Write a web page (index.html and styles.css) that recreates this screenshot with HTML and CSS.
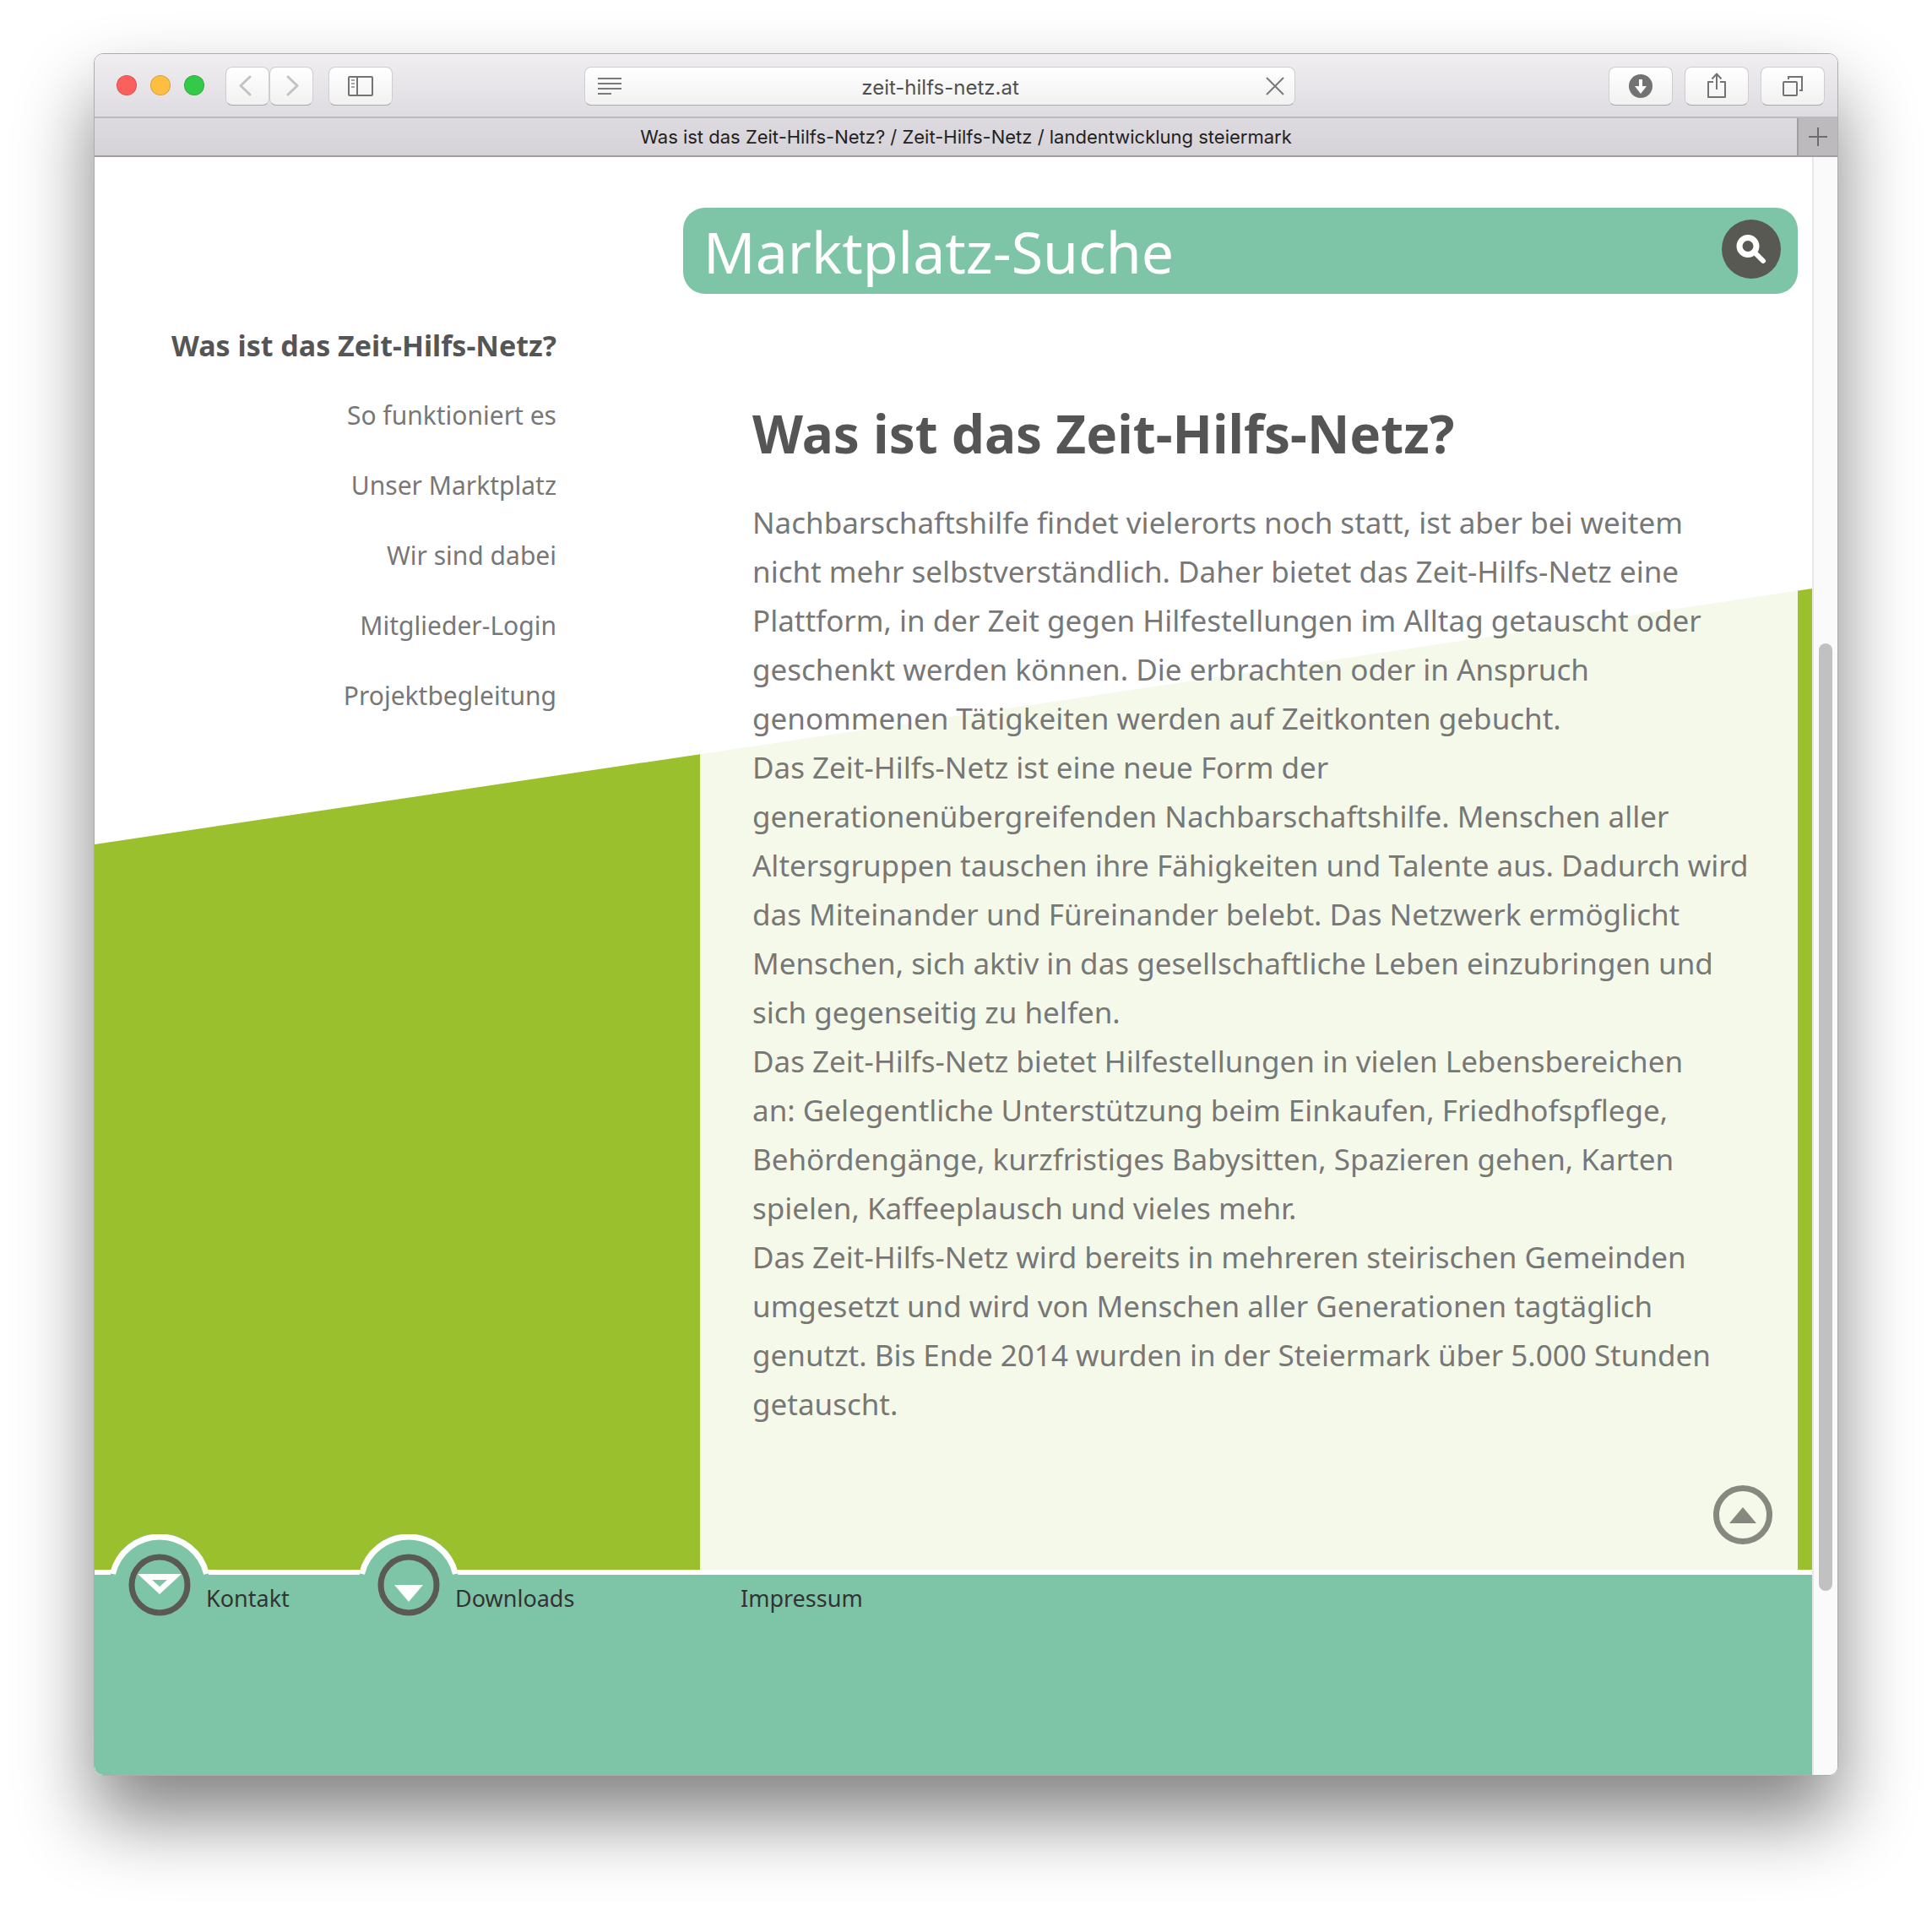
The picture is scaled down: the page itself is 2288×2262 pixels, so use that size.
FILE: index.html
```html
<!DOCTYPE html>
<html lang="de">
<head>
<meta charset="utf-8">
<meta name="viewport" content="width=device-width, initial-scale=1">
<title>Was ist das Zeit-Hilfs-Netz? / Zeit-Hilfs-Netz / landentwicklung steiermark</title>
<link rel="stylesheet" href="styles.css">
</head>
<body>
<div class="window">
  <header class="toolbar">
    <div class="toolbar-left">
      <div class="lights"><span class="light red"></span><span class="light yellow"></span><span class="light green"></span></div>
      <div class="history">
        <button class="tool narrow" type="button" aria-label="Zurück"><svg width="50" height="44" viewBox="0 0 50 44"><path d="M28 11 17 21.500 28 32" fill="none" stroke="#c3c3c3" stroke-width="3" stroke-linecap="round" stroke-linejoin="round"/></svg></button>
        <button class="tool narrow" type="button" aria-label="Vorwärts"><svg width="50" height="44" viewBox="0 0 50 44"><path d="M21 11 32 21.500 21 32" fill="none" stroke="#c3c3c3" stroke-width="3" stroke-linecap="round" stroke-linejoin="round"/></svg></button>
      </div>
      <button class="tool" type="button" aria-label="Seitenleiste"><svg width="74" height="44" viewBox="0 0 74 44"><g fill="none" stroke="#737373" stroke-width="2"><rect x="23" y="11" width="28" height="22" rx="1"/><path d="M33 11v22"/><path stroke="#a5a5a5" d="M26 15h4M26 19h4M26 23h4"/></g></svg></button>
    </div>
    <div class="address">
      <svg width="28" height="44" viewBox="0 0 28 44"><path d="M0 13h28M0 19h28M0 25h28M0 31h16" stroke="#7a7a7a" stroke-width="2"/></svg>
      <input class="address-input" type="text" value="zeit-hilfs-netz.at" aria-label="Adresse">
      <button class="stop" type="button" aria-label="Laden abbrechen"><svg width="22" height="22" viewBox="0 0 22 22"><path d="M1 1 21 21M21 1 1 21" stroke="#7a7a7a" stroke-width="2"/></svg></button>
    </div>
    <div class="toolbar-right">
      <button class="tool" type="button" aria-label="Downloads"><svg width="74" height="44" viewBox="0 0 74 44"><circle cx="37" cy="22" r="14" fill="#737373"/><path d="M35 14h4v8h5l-7 9-7-9h5z" fill="#fff"/></svg></button>
      <button class="tool" type="button" aria-label="Teilen"><svg width="74" height="44" viewBox="0 0 74 44"><path d="M33 17h-6v18h20V17h-6M37 26V8M31.500 13.500 37 7.500l5.500 6" fill="none" stroke="#737373" stroke-width="2" stroke-linejoin="round"/></svg></button>
      <button class="tool" type="button" aria-label="Tabs anzeigen"><svg width="74" height="44" viewBox="0 0 74 44"><g fill="none" stroke="#737373" stroke-width="2"><rect x="26" y="17" width="16" height="16" rx="1"/><path d="M32 14v-3h16v16h-3"/></g></svg></button>
    </div>
  </header>
  <div class="tabs">
    <span class="tab">Was ist das Zeit-Hilfs-Netz? / Zeit-Hilfs-Netz / landentwicklung steiermark</span>
    <button class="new-tab" type="button" aria-label="Neuer Tab"><svg width="22" height="22" viewBox="0 0 22 22"><path d="M11 0v22M0 11h22" stroke="#6e6b6e" stroke-width="2"/></svg></button>
  </div>
  <div class="viewport">
    <div class="page">
      <main class="main">
        <nav class="nav">
          <a class="nav-link current" href="#was">Was ist das Zeit-Hilfs-Netz?</a>
          <a class="nav-link" href="#so">So funktioniert es</a>
          <a class="nav-link" href="#markt">Unser Marktplatz</a>
          <a class="nav-link" href="#dabei">Wir sind dabei</a>
          <a class="nav-link" href="#login">Mitglieder-Login</a>
          <a class="nav-link" href="#projekt">Projektbegleitung</a>
        </nav>
        <div class="panel">
          <form class="search">
            <input class="search-input" type="text" placeholder="Marktplatz-Suche" aria-label="Marktplatz-Suche">
            <button class="search-button" type="button" aria-label="Suchen"><svg width="70" height="70" viewBox="0 0 70 70"><circle cx="31" cy="31.500" r="10" fill="none" stroke="#fff" stroke-width="7"/><path d="M39 39 49 49" stroke="#fff" stroke-width="6" stroke-linecap="round"/></svg></button>
          </form>
          <article class="article" id="was">
            <h1 class="title">Was ist das Zeit-Hilfs-Netz?</h1>
            <p class="text">Nachbarschaftshilfe findet vielerorts noch statt, ist aber bei weitem<br>
            nicht mehr selbstverständlich. Daher bietet das Zeit-Hilfs-Netz eine<br>
            Plattform, in der Zeit gegen Hilfestellungen im Alltag getauscht oder<br>
            geschenkt werden können. Die erbrachten oder in Anspruch<br>
            genommenen Tätigkeiten werden auf Zeitkonten gebucht.</p>
            <p class="text">Das Zeit-Hilfs-Netz ist eine neue Form der<br>
            generationenübergreifenden Nachbarschaftshilfe. Menschen aller<br>
            Altersgruppen tauschen ihre Fähigkeiten und Talente aus. Dadurch wird<br>
            das Miteinander und Füreinander belebt. Das Netzwerk ermöglicht<br>
            Menschen, sich aktiv in das gesellschaftliche Leben einzubringen und<br>
            sich gegenseitig zu helfen.</p>
            <p class="text">Das Zeit-Hilfs-Netz bietet Hilfestellungen in vielen Lebensbereichen<br>
            an: Gelegentliche Unterstützung beim Einkaufen, Friedhofspflege,<br>
            Behördengänge, kurzfristiges Babysitten, Spazieren gehen, Karten<br>
            spielen, Kaffeeplausch und vieles mehr.</p>
            <p class="text">Das Zeit-Hilfs-Netz wird bereits in mehreren steirischen Gemeinden<br>
            umgesetzt und wird von Menschen aller Generationen tagtäglich<br>
            genutzt. Bis Ende 2014 wurden in der Steiermark über 5.000 Stunden<br>
            getauscht.</p>
          </article>
          <a class="to-top" href="#was" aria-label="Nach oben"><svg width="70" height="70" viewBox="0 0 70 70"><circle cx="35" cy="35" r="31.500" fill="none" stroke="#878880" stroke-width="7"/><path d="M35 26 51 45H19z" fill="#878880"/></svg></a>
        </div>
      </main>
      <footer class="footer">
        <a class="footer-link contact" href="#kontakt"><svg class="arch" width="120" height="120" viewBox="0 0 120 120"><path d="M2 47a59 59 0 0 1 116 0v8H2z" fill="#7ec4a7"/><path d="M4.500 47a57 57 0 0 1 111 0" fill="none" stroke="#fff" stroke-width="7"/><circle cx="60" cy="60" r="33" fill="none" stroke="#5a5a53" stroke-width="7"/><path fill-rule="evenodd" d="M34 47h52L60 71zM51 54l9 8 9-8z" fill="#fff"/></svg>Kontakt</a>
        <a class="footer-link downloads" href="#downloads"><svg class="arch" width="120" height="120" viewBox="0 0 120 120"><path d="M2 47a59 59 0 0 1 116 0v8H2z" fill="#7ec4a7"/><path d="M4.500 47a57 57 0 0 1 111 0" fill="none" stroke="#fff" stroke-width="7"/><circle cx="60" cy="60" r="33" fill="none" stroke="#5a5a53" stroke-width="7"/><path d="M43 60h34L60 80z" fill="#fff"/></svg>Downloads</a>
        <a class="footer-link" href="#impressum">Impressum</a>
      </footer>
    </div>
    <div class="scrollbar"><span class="thumb"></span></div>
  </div>
</div>
</body>
</html>
```
FILE: styles.css
```css
* { box-sizing: border-box; }

body {
  margin: 0;
  padding: 63px 111px 159px;
  background: #fff;
  font-family: "Noto Sans", "Open Sans", sans-serif;
  overflow-x: hidden;
}

svg { display: block; }
button { padding: 0; border: 0; background: none; font: inherit; }
a { color: inherit; text-decoration: none; }
input { min-width: 0; border: 0; background: none; outline: 0; font: inherit; }

.window {
  border-radius: 11px;
  overflow: hidden;
  border: 1px solid rgba(0, 0, 0, .32);
  box-shadow: 0 50px 90px rgba(0, 0, 0, .49);
}

/* Browser toolbar */
.toolbar {
  display: grid;
  grid-template-columns: 580px 1fr 642px;
  height: 76px;
  padding-top: 15px;
  border-bottom: 2px solid #bcb9bd;
  background: linear-gradient(#f0eef1, #dedce0);
}
.toolbar-left, .toolbar-right { display: flex; align-items: flex-start; }
.toolbar-left { padding-left: 26px; }
.toolbar-right { justify-content: flex-end; gap: 14px; padding-right: 15px; }
.lights { display: flex; gap: 16px; padding-top: 10px; margin-right: 25px; }
.light { width: 24px; height: 24px; border: 1px solid rgba(0, 0, 0, .14); border-radius: 50%; }
.red { background: #fc605c; }
.yellow { background: #fdbe41; }
.green { background: #35c94a; }
.history { display: flex; margin-right: 18px; }
.tool, .address {
  height: 46px;
  border: 1px solid #cfcdd0;
  border-bottom-color: #aaa8ab;
  border-radius: 8px;
  background: linear-gradient(#fff, #f1f1f1);
}
.tool { width: 76px; }
.narrow { width: 52px; }
.address { display: flex; align-items: center; padding: 0 12px 0 15px; font-family: Inter, Roboto, sans-serif; }
.address-input { flex: 1; padding: 2px 8px 0 0; text-align: center; font-size: 24px; color: #505050; }

.tabs {
  display: flex;
  height: 46px;
  border-bottom: 2px solid #a09ea1;
  background: linear-gradient(#dddbdf, #d5d3d7);
  font-family: Inter, Roboto, sans-serif;
}
.tab { flex: 1; padding-left: 48px; text-align: center; font-size: 22px; line-height: 44px; color: #222; }
.new-tab { display: grid; place-items: center; width: 48px; border-left: 2px solid #a09ea1; background: #bcbabd; }

.viewport { display: flex; }
.page { flex: 1; min-width: 0; background: #fff; }
.scrollbar { width: 30px; padding: 576px 0 0 6px; border-left: 2px solid #e8e8e8; background: #fafafa; }
.thumb { display: block; width: 16px; height: 1122px; border-radius: 8px; background: #c1c1c1; }

/* Page body with the sloping field behind both columns */
.main {
  position: relative;
  display: grid;
  grid-template-columns: 717px 1fr;
  padding-right: 17px;
}
.main::before {
  content: "";
  position: absolute;
  inset: 511px 0 0;
  background: #9ac02e;
  clip-path: polygon(0 303px, 100% 0, 100% 100%, 0 100%);
}
.nav {
  position: relative;
  display: flex;
  flex-direction: column;
  gap: 43px;
  padding: 203px 170px 0 0;
  text-align: right;
}
.nav-link { font-size: 30px; line-height: 40px; color: #777; white-space: nowrap; }
.current { font-size: 34px; font-weight: 700; color: #555; }

.panel { position: relative; padding-top: 60px; background: rgba(255, 255, 255, .9); }
.search {
  display: flex;
  height: 102px;
  margin-left: -20px;
  padding: 0 20px 0 24px;
  border-radius: 26px;
  background: #7ec4a7;
}
.search-input { flex: 1; padding: 0; font-size: 68px; color: #fff; }
.search-input::placeholder { color: #fff; opacity: 1; }
.search-button { width: 70px; height: 70px; margin-top: 14px; border-radius: 50%; background: #585952; }

.article { padding: 123px 0 0 62px; }
.title { margin: 0 0 35px; font-size: 62px; line-height: 84px; color: #555; white-space: nowrap; }
.text { margin: 0; font-size: 35px; line-height: 58px; color: #777; white-space: nowrap; }
.to-top { display: block; width: 70px; margin: 67px 30px 30px auto; }

.footer {
  position: relative;
  display: flex;
  height: 243px;
  padding: 8px 0 0 17px;
  border-top: 6px solid #fff;
  background: #7ec4a7;
  font-size: 27px;
  line-height: 40px;
  color: #333;
}
.footer-link { display: flex; align-items: flex-start; }
.contact { width: 295px; }
.downloads { width: 453px; }
.arch { margin: -56px -5px 0 0; }
```
